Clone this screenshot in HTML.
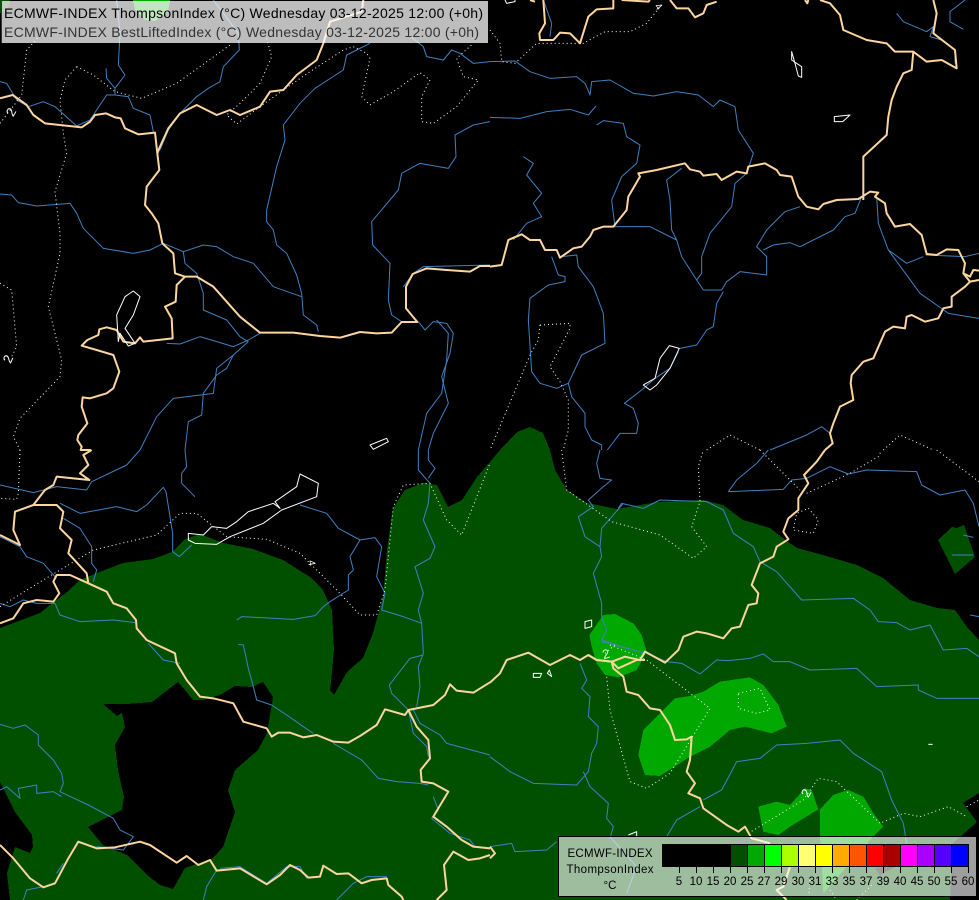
<!DOCTYPE html>
<html>
<head>
<meta charset="utf-8">
<title>ECMWF-INDEX ThompsonIndex</title>
<style>
html,body{margin:0;padding:0;background:#000;width:979px;height:900px;overflow:hidden}
svg{display:block;font-family:"Liberation Sans",sans-serif}
.b,.r,.d,.l{fill:none;vector-effect:non-scaling-stroke;stroke-linejoin:round}
.b{stroke:#fcd59f;stroke-width:2}
.r{stroke:#4080c0;stroke-width:1}
.d{stroke:#fff;stroke-width:1;stroke-dasharray:1 3}
.l{stroke:#fff;stroke-width:1}
</style>
</head>
<body>
<svg width="979" height="900" viewBox="0 0 979 900" xmlns="http://www.w3.org/2000/svg">
<rect width="979" height="900" fill="#000"/>
<!-- dark green -->
<g fill="#005000" shape-rendering="crispEdges">
<path d="M0 628 40 613 50 605 67 592 80 580 97 573 123 563 153 559 172 552 185 539 200 534 223 543 253 549 283 560 310 577 323 590 332 610 334 650 331 683 330 690 334 695 347 672 363 658 373 633 383 597 387 550 393 508 405 490 423 483 437 485 448 507 462 500 477 477 490 462 500 450 517 432 530 427 543 433 550 450 555 470 567 490 587 503 617 509 657 502 703 500 723 505 743 520 770 528 788 542 797 548 823 555 857 565 883 578 910 600 937 608 955 610 967 627 979 640 979 793 963 803 977 822 953 843 950 900 0 900Z"/>
<path d="M938 540 952 527 957 528 964 525 975 557 955 574Z"/>
<ellipse cx="0" cy="0" rx="10" ry="13"/>
</g>
<!-- black holes -->
<g fill="#000" shape-rendering="crispEdges">
<path d="M103 704 117 716 122 713 125 727 115 745 118 770 124 797 122 810 112 815 88 827 103 845 127 855 147 875 160 885 173 889 185 868 213 858 223 847 235 812 228 790 235 770 258 750 267 733 273 697 263 682 252 687 235 686 220 695 203 700 193 700 185 690 178 682 165 692 152 702 127 704Z"/>
<path d="M0 782 15 812 32 835 33 847 30 853 15 847 7 873 10 900 0 900Z"/>
<path d="M875 868 897 866 880 875Z"/>
</g>
<!-- mid green -->
<g transform="translate(490 450) scale(.33333)" fill="#00a800" shape-rendering="crispEdges">
<path d="M340 495 375 492 430 520 455 555 470 605 440 660 385 682 345 675 320 640 305 590 298 555Z"/>
<path d="M555 745 600 738 640 725 690 695 780 682 820 705 865 765 890 830 845 850 765 830 720 840 660 890 600 920 510 978 465 975 445 915 460 840Z"/>
<path d="M805 1070 860 1055 900 1065 945 1015 965 1020 985 1078 900 1130 865 1155 820 1145Z"/>
<path d="M990 1078 1030 1035 1075 1020 1120 1040 1150 1090 1180 1130 1145 1165 1000 1330 990 1160Z"/>
</g>
<path d="M133 0 170 0 168 12 155 21 145 20 135 10Z" fill="#00a800" shape-rendering="crispEdges"/>

<!-- TL quadrant -->
<g transform="scale(.33333)">
<g class="r-g">
<path class="r" d="M0 245 20 250 50 300 85 320 130 305 165 320 230 378 270 360 320 285 345 285 385 290 400 325 450 345 460 395"/>
<path class="r" d="M640 0 715 100 718 150 670 200 660 245 625 265 590 290 545 335 505 390 480 450"/>
<path class="r" d="M350 0 360 100 355 195 375 225 345 265 320 235 318 205M345 265 345 285"/>
<path class="r" d="M1110 130 1070 150 1040 165 1030 210 945 265 900 310 850 375 855 420 830 500 800 630 800 665 820 690 830 735 860 760 890 825 905 880 910 945 950 975 955 995"/>
<path class="r" d="M1470 365 1420 375 1365 405 1368 470 1345 505 1260 490 1205 520 1195 570 1115 665 1118 735 1170 790 1165 900 1175 945 1205 965"/>
<path class="r" d="M0 582 35 585 55 608 110 618 210 610 230 640 250 685 310 745 400 760 450 750 490 730 550 755 610 735 650 740 700 770 760 790 820 860 905 890"/>
<path class="r" d="M550 755 555 790 590 820 610 880 610 930 680 960 720 1010 745 1025"/>
<path class="r" d="M500 1030 540 1032 600 1010 700 1040 745 1020 780 1000"/>
<path class="r" d="M745 1025 700 1065 650 1105 640 1180 520 1195 470 1250 420 1350"/>
<path class="r" d="M700 1065 680 1105 650 1125 610 1180 605 1245 565 1265 555 1350"/>
<path class="r" d="M1255 965 1275 990 1300 965 1340 970 1360 1000 1350 1060 1325 1130 1345 1210 1300 1300 1285 1350"/>
<path class="r" d="M1310 960 1345 1000 1340 1080 1325 1180 1280 1240 1255 1350"/>
<path class="r" d="M1210 860 1240 820 1270 800 1470 795"/>
<path class="r" d="M1220 100 1270 140 1280 170 1330 180 1355 150 1380 160 1420 190 1470 185"/>
</g>
<path class="d" d="M0 370 35 325 65 285 80 150 130 95"/>
<path class="d" d="M230 200 195 240 180 300 190 400 200 460 165 575 180 700 180 760 145 920 185 1080 180 1130 60 1255 40 1310 60 1350"/>
<path class="d" d="M230 200 280 225 345 275 425 295 530 250 690 135"/>
<path class="d" d="M800 115 815 170 780 250 720 310 680 345 710 372 780 320 850 270 930 215 1030 150 1060 140 1100 160 1110 175 1085 290 1110 315 1180 275 1260 218 1290 240 1265 290 1265 365 1300 370 1370 320 1435 240 1390 230 1370 175 1420 130"/>
<path class="d" d="M0 850 35 870 50 1040 35 1070"/>
<path class="b" d="M0 295 38 285 80 315 100 345 135 370 190 376 245 382 270 365 285 345 318 340 345 352 362 355 375 385 415 403 465 398 472 460 478 510 440 560 435 615 455 640 475 670 487 730 520 760 525 820 555 830 590 830 640 860 680 905 720 950 780 998 880 998 960 1008 1020 1013 1080 996 1130 1000 1175 998 1205 966 1252 966 1218 925 1218 860 1238 822 1280 805 1340 810 1410 815 1440 798 1470 798"/>
<path class="b" d="M555 830 530 855 527 905 495 920 515 955 518 1015 430 1025 420 1012 405 1030 370 1025 350 990 320 982 298 988 295 1005 262 1020 245 1037 290 1050 340 1065 358 1115 340 1165 320 1180 270 1195 248 1192 245 1220 262 1270 235 1305 232 1320 245 1340 242 1350 272 1350"/>
<path class="b" d="M1090 0 1085 35 990 65 970 130 950 180 890 225 850 270 810 275 780 320 720 345 690 330 650 345 590 315 540 340 505 385 480 440 472 460"/>
<path class="l" d="M355 1025 350 945 375 890 400 873 420 890 400 945 375 985 405 1030 385 1038 360 1000Z"/>
<path class="l" d="M1110 1335 1160 1315 1165 1325 1120 1348Z"/>
</g>

<!-- TR quadrant -->
<g transform="translate(490 0) scale(.33333)">
<path class="r" d="M0 185 75 183 120 215 180 235 260 230 285 250 300 285 305 245 360 240 430 280 490 288 560 275 625 285 670 320 690 300 735 320 745 390 790 460 770 520 735 550 725 620 660 700 635 770 635 820 620 840 640 870 695 870 710 845 750 815 830 825 830 770 800 740 830 690 885 635 930 620"/>
<path class="r" d="M0 352 90 355 170 335 240 328 295 345 318 318"/>
<path class="r" d="M320 375 340 362 400 370 410 410 450 435 440 490 395 530 365 600 375 680 480 680 560 720 575 770 620 840"/>
<path class="r" d="M100 470 130 490 110 525 155 580 130 610 155 650 110 670 70 720"/>
<path class="r" d="M575 505 530 540 540 600 545 690 560 720"/>
<path class="r" d="M820 750 850 735 900 728 930 740 1030 690 1065 650 1095 640 1115 590"/>
<path class="r" d="M1160 590 1165 670 1195 750 1250 790 1300 770"/>
<path class="r" d="M1195 750 1290 880 1340 915 1375 940 1467 955"/>
<path class="r" d="M1307 765 1425 770 1467 760"/>
<path class="r" d="M1220 40 1240 65 1310 95 1330 80 1320 110 1355 120 1395 150 1395 190"/>
<path class="r" d="M1425 0 1380 35 1380 65 1420 88"/>
<path class="r" d="M160 0 185 70 180 110"/>
<path class="r" d="M185 770 205 825 225 830 225 845 175 855 120 895 115 960 125 1115 150 1150 200 1165 235 1150 275 1065 345 1030 340 940 310 860 265 800 260 765 215 770"/>
<path class="r" d="M570 1045 620 1035 650 990 670 980 680 910 700 875"/>
<path class="r" d="M235 1150 245 1190 285 1240 285 1280 305 1320 335 1335 335 1350"/>
<path class="r" d="M352 1350 390 1300 440 1300 445 1270 430 1225 403 1210 455 1170 495 1135 540 1105 565 1055"/>
<path class="r" d="M840 1350 950 1305 995 1280 1020 1300"/>
<path class="d" d="M0 90 30 130 35 185 75 190 140 130 230 130 280 130 345 95 420 95 470 70 510 20"/>
<path class="d" d="M150 975 240 970 240 985 180 1100 210 1145 235 1200 235 1290 220 1350"/>
<path class="d" d="M150 975 145 1020 120 1065 0 1350"/>
<path class="d" d="M650 1350 720 1305 810 1350M1180 1350 1230 1305 1330 1350"/>
<path class="b" d="M160 0 165 70 148 100 150 120 190 120 210 98 240 100 270 130 295 50 320 28 370 25 370 0"/>
<path class="b" d="M0 800 35 795 55 720 95 703 120 720 150 720 165 750 200 750 210 773 250 745 275 740 300 710 310 690 340 680 370 680 410 630 415 590 450 530 445 520 500 510 585 490 600 508 630 515 640 527 680 522 695 540 740 515 770 520 775 500 825 490 860 510 870 525 905 530 925 590 950 620 985 628 1000 612 1040 600 1105 597 1140 575 1165 578 1155 590 1185 610 1190 640 1215 680 1260 672 1295 705 1310 762 1340 765 1370 748 1405 750 1425 790 1420 820 1440 830 1450 810 1467 812"/>
<path class="b" d="M1440 845 1425 860 1385 890 1385 920 1360 925 1345 955 1305 965 1265 945 1250 950 1245 985 1210 980 1185 995 1150 1075 1120 1085 1085 1125 1082 1150 1090 1200 1050 1220 1030 1270 1020 1300 1028 1330 1005 1350"/>
<path class="b" d="M1420 820 1440 845 1467 840"/>
<path class="b" d="M1120 600 1120 470 1190 405 1195 350 1205 300 1220 260 1240 220 1265 210 1270 155 1215 155 1190 130 1130 120 1060 90 1050 45 1020 10 990 0"/>
<path class="b" d="M1270 155 1310 185 1355 180 1400 205 1395 150 1330 100 1340 40 1330 0"/>
<path class="b" d="M540 0 560 25 595 25 615 52 640 40 650 15 680 5M395 0 475 5 480 0M945 0 952 10 955 0M120 0 135 5"/>
<path class="l" d="M905 155 905 180 935 200 935 232 925 228 915 190Z"/>
<path class="l" d="M1033 350 1080 345 1058 365 1033 365Z"/>
<path class="l" d="M538 1037 510 1075 495 1135 460 1155 480 1170 500 1155 540 1105 568 1045Z"/>
<path class="l" d="M45 0 50 10 75 5 75 0"/>
</g>

<!-- BL quadrant -->
<g transform="translate(0 450) scale(.33333)">
<path class="r" d="M0 105 100 128 170 110 260 120 275 95 380 45 420 0"/>
<path class="r" d="M555 0 560 50 545 70 545 100 585 140"/>
<path class="r" d="M180 160 240 190 350 170 410 185 440 165 490 112 498 125 518 250 518 305 538 320 575 285"/>
<path class="r" d="M190 205 240 235 275 290 275 340 290 360 280 395"/>
<path class="r" d="M0 260 60 290 80 320 130 340 165 380"/>
<path class="r" d="M0 460 30 470 70 450 110 460 165 460 180 495 240 515 340 510 405 518"/>
<path class="r" d="M445 580 490 630 540 640"/>
<path class="r" d="M710 510 725 500 880 508 945 497 970 470 990 455 1045 420 1045 375 1060 360 1050 320 1080 270 1125 263 1145 290 1130 380 1155 430 1145 480 1210 500 1265 520 1270 610 1255 650 1260 710 1250 770"/>
<path class="r" d="M900 165 980 190 1015 235 1080 270"/>
<path class="r" d="M1255 0 1255 60 1290 100 1285 160 1270 210 1305 290 1290 325 1245 350 1270 430 1255 480 1265 520"/>
<path class="r" d="M1285 0 1285 30 1305 55 1285 85"/>
<path class="r" d="M1270 615 1230 625 1168 705 1175 730 1225 780 1240 850 1280 890 1285 920"/>
<path class="r" d="M1240 780 1260 820 1320 855 1340 880 1470 915"/>
<path class="r" d="M715 583 730 585 745 655 760 710 770 750 815 765 860 795 910 830 940 850"/>
<path class="r" d="M1000 880 1085 930 1135 985 1190 995 1260 1000 1285 1005"/>
<path class="r" d="M0 823 40 835 75 825 115 855 115 885 160 930 185 970 190 1000 180 1025 265 1065 340 1105 360 1140 400 1160 370 1200 290 1190"/>
<path class="r" d="M0 1020 20 1010 60 1045 55 1015 110 1005 110 1030 160 1025 185 1040"/>
<path class="r" d="M1300 1040 1315 1080 1295 1105 1350 1150 1410 1170 1425 1190"/>
<path class="r" d="M70 1350 80 1320 130 1310M190 1240 170 1270"/>
<path class="r" d="M650 1260 620 1310 610 1350M660 1255 720 1250 800 1300 860 1250 900 1250 920 1285"/>
<path class="r" d="M1010 1350 1060 1300 1100 1280 1160 1280"/>
<path class="d" d="M60 0 55 130 50 148 0 145"/>
<path class="d" d="M0 470 130 390 280 300 470 255 540 190 590 190 680 260 800 268 900 310 1010 420 1080 495 1130 495 1155 420 1180 170 1210 105 1290 100 1340 210 1385 255 1470 40"/>
<path class="b" d="M275 0 250 15 265 45 240 70 268 90 170 80 160 105 135 120 100 165 45 185 40 240 60 285 40 275 0 255"/>
<path class="b" d="M100 165 170 165 190 185 180 235 215 270 205 310 260 370 265 400 320 425 340 460 380 475 408 510 410 535 440 570 525 610 530 640 560 690 600 740 640 745 700 760 730 815 800 835 815 860 835 848 870 848 910 862 950 855 1000 875 1045 878 1080 858 1130 825 1155 778 1215 795 1225 780 1300 765 1335 735 1350 703 1370 722 1420 728 1470 697"/>
<path class="b" d="M0 520 40 505 70 460 110 450 160 455 178 430 160 395 170 375 210 375 265 400"/>
<path class="b" d="M0 1185 40 1225 90 1285 130 1312 165 1300 205 1225 235 1175 290 1195 345 1192 420 1175 450 1185 530 1238 560 1218 595 1245 630 1230 650 1262 720 1255 800 1303 840 1275 870 1245 900 1260 925 1283 960 1280 970 1247 1010 1272 1045 1270 1085 1300 1115 1290 1160 1285 1165 1305 1205 1340 1210 1350"/>
<path class="b" d="M1225 780 1250 830 1285 870 1290 925 1262 960 1265 995 1300 1000 1345 1025 1300 1100 1340 1130 1385 1170 1420 1190 1470 1195"/>
<path class="b" d="M1310 1350 1340 1320 1332 1245 1360 1205 1405 1230 1440 1225 1470 1215"/>
<path class="l" d="M565 250 610 255 635 230 680 235 710 215 745 185 820 160 840 175 825 155 890 110 900 72 955 100 950 140 845 180 790 220 690 260 650 283 585 280 565 270Z"/>
</g>

<!-- BR quadrant -->
<g transform="translate(490 450) scale(.33333)">
<path class="r" d="M330 0 320 40 330 85 365 90 340 110 295 150 310 170 265 200 285 260 330 290 335 320 310 370 335 460 335 500 350 540 335 570 395 590 465 610"/>
<path class="r" d="M385 175 395 160 460 175 510 150 650 155 700 180 730 250 790 290 810 335 860 365 935 450 1090 445 1140 480 1165 515 1220 518 1260 540 1320 525 1360 600 1430 595 1467 620"/>
<path class="r" d="M335 235 400 160M335 235 330 290"/>
<path class="r" d="M715 125 880 118 905 90 950 85M715 125 740 90 800 40 835 0"/>
<path class="r" d="M950 85 1020 50 1075 72 1130 60 1280 65 1295 105 1350 135 1425 120 1450 160 1467 230"/>
<path class="r" d="M1385 315 1450 315M1440 495 1467 500M1420 255 1450 262"/>
<path class="r" d="M270 640 290 690 275 715 300 740 295 800 325 830 320 880 305 910 295 965 260 1005 130 1000 60 965 0 920"/>
<path class="r" d="M280 965 300 1010 355 1060 350 1105 370 1130 360 1165"/>
<path class="r" d="M335 575 430 600"/>
<path class="r" d="M470 610 530 635 575 640 630 672 680 630 715 632 780 625 820 612 850 635 900 635 960 660 1100 655 1160 710 1285 705 1285 720 1340 745 1467 745"/>
<path class="r" d="M640 1050 695 1020 740 935 810 925 860 885 950 880 1050 870 1090 910 1175 965 1205 1050 1240 1120 1250 1180"/>
<path class="r" d="M630 1070 560 1110 530 1160"/>
<path class="r" d="M0 1190 65 1180 75 1205 170 1200 200 1175"/>
<path class="r" d="M360 1160 440 1250 410 1330"/>
<path class="d" d="M215 0 230 120 365 215 510 255 610 325 650 290 605 230 630 155 625 50 640 0"/>
<path class="d" d="M810 0 930 120M950 130 1080 70 1165 20 1175 0"/>
<path class="d" d="M955 175 985 210 970 250 910 240 920 190Z"/>
<path class="d" d="M1340 0 1467 95"/>
<path class="d" d="M360 585 470 630 660 775 540 970 470 1015 420 995 360 780 350 680"/>
<path class="d" d="M345 610 375 585"/>
<path class="d" d="M745 730 810 715 840 780 800 790 745 775Z"/>
<path class="d" d="M775 1150 890 1080 940 1050 985 985 1040 995 1170 1120 1240 1090 1290 1100 1375 1070 1430 1100M1430 1070 1467 1050"/>
<path class="d" d="M960 1290 955 1350M1020 1320 1040 1350M1100 1350 1150 1300"/>
<path class="b" d="M0 698 30 670 50 630 115 608 180 645 240 615 270 630 295 615 320 630 365 635 405 620 450 630 465 605 525 638 565 600 580 560 620 545 650 550 700 565 725 535 750 530 775 465 800 460 805 430 785 405 810 340 850 320 860 290 895 268 880 245 895 205 925 180 925 145 955 100 942 75 980 35 1005 0"/>
<path class="b" d="M365 635 370 655 400 680 410 725 445 735 480 775 510 780 540 825 555 870 590 868 605 860 600 930 590 965 615 1000 595 1030 630 1045 640 1075 710 1125 745 1145 765 1130 785 1165 840 1180"/>
<path class="b" d="M295 615 320 630 365 635 385 655 440 630 465 630"/>
<path class="b" d="M900 1250 880 1310 860 1320 890 1350"/>
<path class="b" d="M0 1190 15 1210 0 1225"/>
<path class="l" d="M285 515 305 510 305 530 285 535Z"/>
<path class="l" d="M130 670 155 670 150 682 130 682Z"/>
<path class="l" d="M178 660 185 680 172 670Z"/>
<path class="l" d="M415 1155 440 1145 440 1160"/>
<path class="l" d="M1315 883 1328 883"/>
</g>

<!-- contour labels -->
<g fill="#fff" font-size="13" text-anchor="middle" dominant-baseline="central">
<text transform="translate(11 112) rotate(-60)">2</text>
<text transform="translate(8 359) rotate(-65)">2</text>
<text transform="translate(606 654) rotate(-15)" fill="#d0ffd0">2</text>
<text transform="translate(806 793) rotate(-60)">2</text>
<text transform="translate(311 563) rotate(80)" font-size="10">4</text>
<text transform="translate(658 7) rotate(50)" font-size="10">4</text>
</g>

<!-- header -->
<rect x="1" y="1" width="487" height="42" fill="#fff" fill-opacity=".74"/>
<rect x="1" y="0" width="1" height="43" fill="#333"/>
<text x="4" y="18" font-size="14" fill="#000" textLength="479" lengthAdjust="spacing">ECMWF-INDEX ThompsonIndex (°C) Wednesday 03-12-2025 12:00 (+0h)</text>
<text x="4" y="37" font-size="14" fill="#333" textLength="475" lengthAdjust="spacing">ECMWF-INDEX BestLiftedIndex (°C) Wednesday 03-12-2025 12:00 (+0h)</text>

<!-- legend -->
<rect x="558.5" y="836.5" width="418" height="60" fill="#fff" fill-opacity=".62" stroke="#000" stroke-width="1"/>
<g font-size="11.5" fill="#000" text-anchor="middle">
<text x="610" y="857" textLength="85" lengthAdjust="spacing">ECMWF-INDEX</text>
<text x="610" y="873" textLength="87" lengthAdjust="spacing">ThompsonIndex</text>
<text x="610" y="889">°C</text>
</g>
<g shape-rendering="crispEdges">
<rect x="662" y="844" width="306" height="23" fill="#000"/>
<rect x="730" y="844" width="17" height="23" fill="#005000"/>
<rect x="747" y="844" width="17" height="23" fill="#00a800"/>
<rect x="764" y="844" width="17" height="23" fill="#00ff00"/>
<rect x="781" y="844" width="17" height="23" fill="#aaff00"/>
<rect x="798" y="844" width="17" height="23" fill="#ffff70"/>
<rect x="815" y="844" width="17" height="23" fill="#ffff00"/>
<rect x="832" y="844" width="17" height="23" fill="#ffaa00"/>
<rect x="849" y="844" width="17" height="23" fill="#ff5500"/>
<rect x="866" y="844" width="17" height="23" fill="#ff0000"/>
<rect x="883" y="844" width="17" height="23" fill="#aa0000"/>
<rect x="900" y="844" width="17" height="23" fill="#ff00ff"/>
<rect x="917" y="844" width="17" height="23" fill="#aa00ff"/>
<rect x="934" y="844" width="17" height="23" fill="#5500ff"/>
<rect x="951" y="844" width="17" height="23" fill="#0000ff"/>
<rect x="662.5" y="844.5" width="306" height="22" fill="none" stroke="#000"/>
<path d="M679.5 844V873M696.5 844V873M713.5 844V873M730.5 844V873M747.5 844V873M764.5 844V873M781.5 844V873M798.5 844V873M815.5 844V873M832.5 844V873M849.5 844V873M866.5 844V873M883.5 844V873M900.5 844V873M917.5 844V873M934.5 844V873M951.5 844V873M968.5 844V873" stroke="#000" fill="none"/>
</g>
<g font-size="11.5" fill="#000" text-anchor="middle">
<text x="679" y="885">5</text><text x="696" y="885">10</text><text x="713" y="885">15</text><text x="730" y="885">20</text><text x="747" y="885">25</text><text x="764" y="885">27</text><text x="781" y="885">29</text><text x="798" y="885">30</text><text x="815" y="885">31</text><text x="832" y="885">33</text><text x="849" y="885">35</text><text x="866" y="885">37</text><text x="883" y="885">39</text><text x="900" y="885">40</text><text x="917" y="885">45</text><text x="934" y="885">50</text><text x="951" y="885">55</text><text x="968" y="885">60</text>
</g>
</svg>
</body>
</html>
